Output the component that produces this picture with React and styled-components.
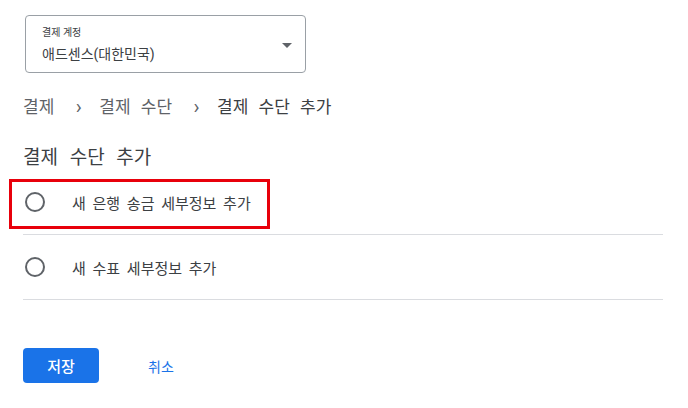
import React from "react";
import styled, { createGlobalStyle } from "styled-components";

const Global = createGlobalStyle`
  html, body { margin: 0; padding: 0; background: #fff; }
  body { font-family: Roboto, "Noto Sans CJK KR", "Noto Sans", sans-serif; color: #3c4043; }
  * { box-sizing: border-box; }
`;

const Page = styled.div`
  width: 688px;
  height: 408px;
  padding: 15px 0 0 23px;
  display: flex;
  flex-direction: column;
  align-items: flex-start;
`;

const Select = styled.div`
  margin-left: 2px;
  width: 281px;
  height: 58px;
  border: 1px solid #9aa0a6;
  border-radius: 4px;
  padding: 10px 16px 0 16px;
  display: flex;
  align-items: flex-start;
  justify-content: space-between;
`;

const SelectText = styled.div`
  display: flex;
  flex-direction: column;
`;

const SelectLabel = styled.span`
  font-size: 10px;
  line-height: 14px;
  color: #3c4043;
`;

const SelectValue = styled.span`
  margin-top: 4px;
  font-size: 14px;
  line-height: 20px;
  color: #3c4043;
`;

const Caret = styled.span`
  margin-top: 17px;
  margin-right: -3px;
  width: 0;
  height: 0;
  border-left: 5px solid transparent;
  border-right: 5px solid transparent;
  border-top: 5px solid #5f6368;
`;

const Crumbs = styled.nav`
  margin-top: 22px;
  display: flex;
  align-items: center;
  font-size: 17px;
  line-height: 24px;
  word-spacing: 6px;
  color: #5f6368;
`;

const Crumb = styled.span`
  color: ${(p) => (p.$current ? "#3c4043" : "#5f6368")};
`;

const Sep = styled.span`
  width: 45px;
  display: flex;
  justify-content: center;
  font-size: 20px;
  line-height: 24px;
  padding-left: 4px;
  color: #5f6368;
`;

const Heading = styled.h2`
  margin: 27px 0 0 0;
  font-size: 19px;
  line-height: 24px;
  font-weight: 400;
  word-spacing: 7px;
  color: #3c4043;
`;

const Options = styled.div`
  width: 640px;
  display: flex;
  flex-direction: column;
`;

const Option = styled.label`
  position: relative;
  height: 65px;
  display: flex;
  align-items: center;
  padding-left: 2px;
  border-bottom: 1px solid #dadce0;
  font-size: 15px;
  word-spacing: 3px;
  color: #3c4043;
`;

const Radio = styled.span`
  width: 20px;
  height: 20px;
  border: 2px solid #5f6368;
  border-radius: 50%;
  margin-right: 27px;
  flex-shrink: 0;
`;

const Highlight = styled.span`
  position: absolute;
  left: -14px;
  top: 9px;
  width: 261px;
  height: 50px;
  border: 3px solid #e8000b;
  pointer-events: none;
`;

const Actions = styled.div`
  margin-top: 48px;
  display: flex;
  align-items: center;
`;

const Primary = styled.button`
  width: 76px;
  height: 35px;
  border: none;
  border-radius: 4px;
  background: #1a73e8;
  color: #fff;
  font-family: inherit;
  font-size: 15px;
  font-weight: 500;
`;

const TextButton = styled.button`
  margin-left: 49px;
  border: none;
  background: none;
  padding: 0;
  color: #1a73e8;
  font-family: inherit;
  font-size: 14px;
`;

export default function App() {
  return (
    <>
      <Global />
      <Page>
        <Select>
          <SelectText>
            <SelectLabel>결제 계정</SelectLabel>
            <SelectValue>애드센스(대한민국)</SelectValue>
          </SelectText>
          <Caret />
        </Select>
        <Crumbs>
          <Crumb>결제</Crumb>
          <Sep>›</Sep>
          <Crumb>결제 수단</Crumb>
          <Sep>›</Sep>
          <Crumb $current>결제 수단 추가</Crumb>
        </Crumbs>
        <Heading>결제 수단 추가</Heading>
        <Options>
          <Option>
            <Highlight />
            <Radio />
            새 은행 송금 세부정보 추가
          </Option>
          <Option>
            <Radio />
            새 수표 세부정보 추가
          </Option>
        </Options>
        <Actions>
          <Primary>저장</Primary>
          <TextButton>취소</TextButton>
        </Actions>
      </Page>
    </>
  );
}
